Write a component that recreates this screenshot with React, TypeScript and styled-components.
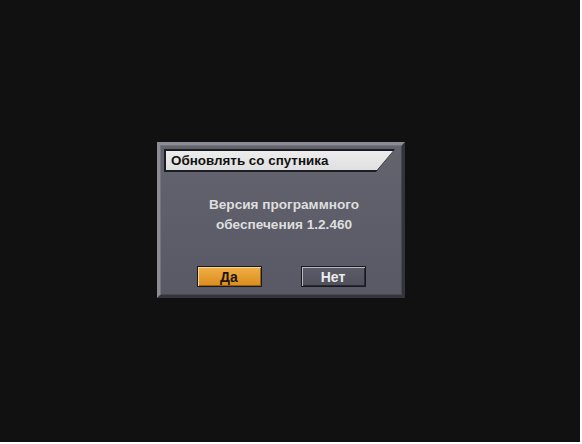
import React from "react";
import styled, { createGlobalStyle } from "styled-components";

const Global = createGlobalStyle`
  html, body { margin: 0; padding: 0; background: #ffffff; }
  #root { width: 582px; height: 444px; }
`;

const Frame = styled.div`
  width: 582px;
  height: 444px;
  background: #ffffff;
  box-sizing: border-box;
  padding: 0 2px 2px 0;
`;

const Screen = styled.div`
  width: 580px;
  height: 442px;
  background: #111111;
  box-sizing: border-box;
  padding: 142px 0 0 157px;
  display: flex;
  align-items: flex-start;
  font-family: "Liberation Sans", Arial, sans-serif;
`;

const Dialog = styled.div`
  width: 248px;
  height: 156px;
  box-sizing: border-box;
  background: linear-gradient(180deg, #64646f 0%, #5d5d69 60%, #595965 100%);
  border-style: solid;
  border-width: 3px;
  border-color: #8c8c95 #34343c #34343c #8c8c95;
  box-shadow: inset 1px 1px 0 #74747e, inset -1px -1px 0 #48484f;
  display: flex;
  flex-direction: column;
  padding: 4px 7px 8px 4px;
`;

const TitleOuter = styled.div`
  height: 23px;
  width: 231px;
  box-sizing: border-box;
  background: #1c1c24;
  padding: 2px 0 2px 2px;
  clip-path: polygon(0 0, 100% 0, calc(100% - 19px) 100%, 0 100%);
  display: flex;
`;

const TitleFill = styled.div`
  flex: 1;
  background: linear-gradient(180deg, #ececec 0%, #e0e0e0 100%);
  clip-path: polygon(0 0, calc(100% - 2px) 0, calc(100% - 18px) 100%, 0 100%);
  display: flex;
  align-items: center;
  padding-left: 5px;
  font-size: 13.4px;
  font-weight: bold;
  color: #121212;
`;

const Message = styled.div`
  margin-top: 23px;
  padding-left: 9px;
  text-align: center;
  font-size: 13.6px;
  line-height: 20px;
  font-weight: bold;
  color: #dedede;
`;

const Buttons = styled.div`
  margin-top: 31px;
  display: flex;
  justify-content: center;
  gap: 39px;
  padding-left: 3px;
`;

const Button = styled.div<{ $active?: boolean }>`
  width: 65px;
  height: 21px;
  box-sizing: border-box;
  display: flex;
  align-items: center;
  justify-content: center;
  font-size: 14px;
  font-weight: bold;
  border: 1px solid #1a1a1e;
  ${(p) =>
    p.$active
      ? `
    background: linear-gradient(180deg, #f0b048 0%, #e39a2c 60%, #d98e22 100%);
    color: #1e1408;
    box-shadow: inset 1px 1px 0 #f8d8a0, inset -1px -1px 0 #9a6010;
  `
      : `
    background: linear-gradient(180deg, #5c5c68 0%, #50505c 100%);
    color: #ececec;
    box-shadow: inset 1px 1px 0 #b8b8c0, inset -1px -1px 0 #2a2a32;
  `}
`;

export default function App() {
  return (
    <>
      <Global />
      <Frame>
        <Screen>
          <Dialog>
            <TitleOuter>
              <TitleFill>Обновлять со спутника</TitleFill>
            </TitleOuter>
            <Message>
              Версия программного
              <br />
              обеспечения 1.2.460
            </Message>
            <Buttons>
              <Button $active>Да</Button>
              <Button>Нет</Button>
            </Buttons>
          </Dialog>
        </Screen>
      </Frame>
    </>
  );
}
